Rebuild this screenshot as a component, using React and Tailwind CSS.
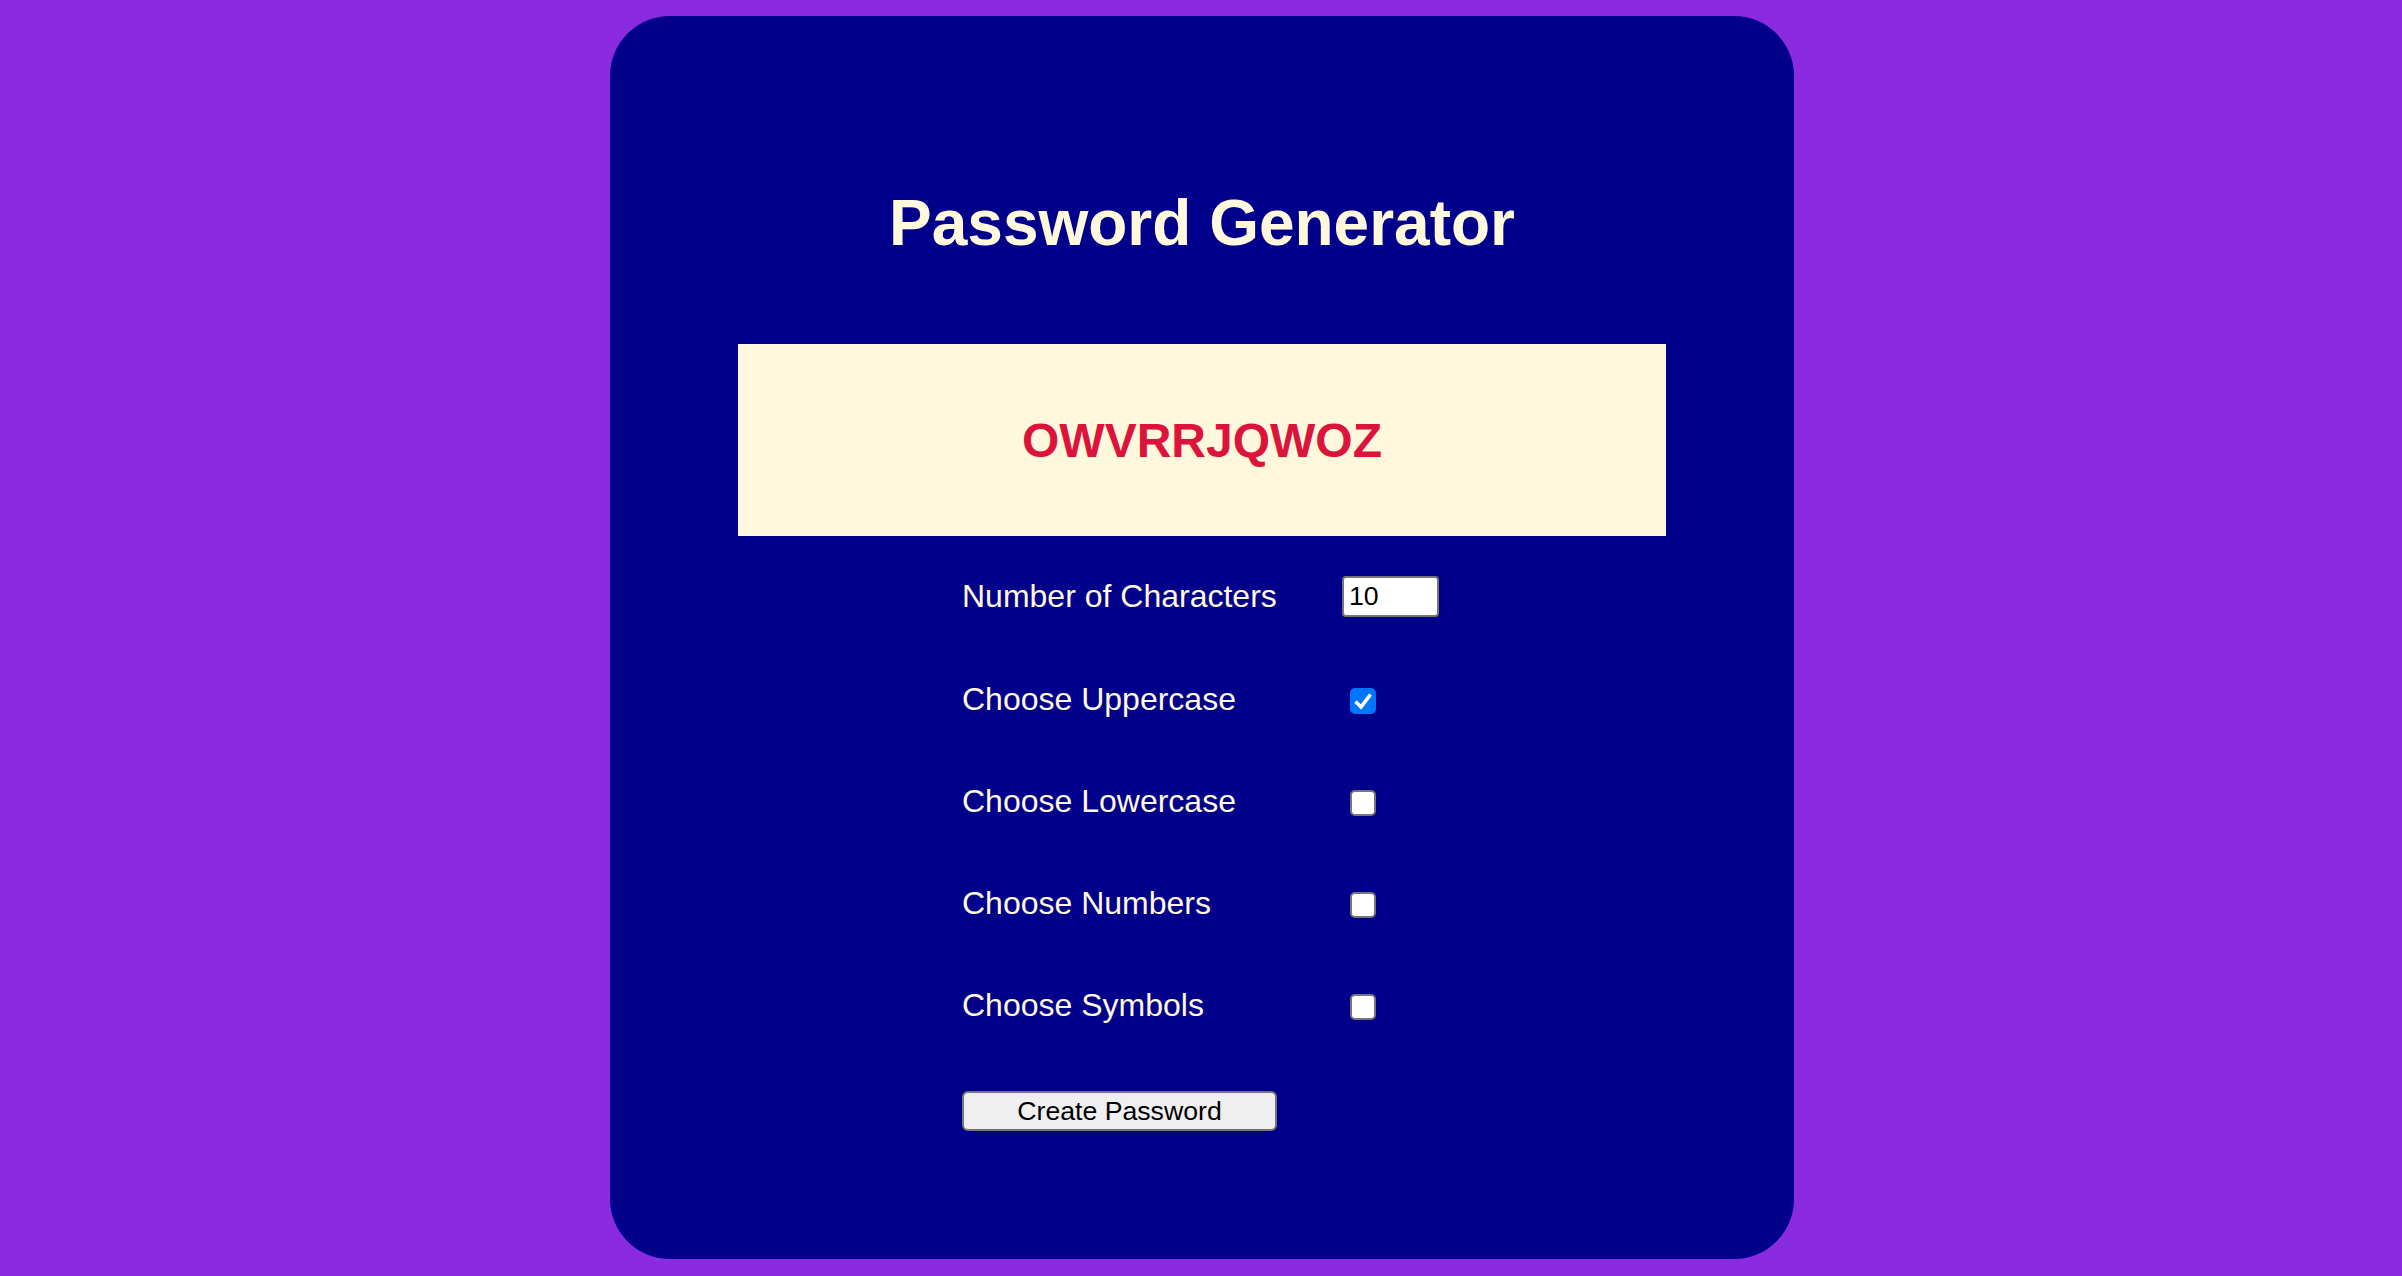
import { useState } from "react";

const FONT = { fontFamily: '"Liberation Sans", Arial, sans-serif' };

function CheckBox({ checked, onChange }) {
  return (
    <label className="relative ml-[8px] mt-[4px] block h-[26px] w-[26px] cursor-pointer">
      <input
        type="checkbox"
        checked={checked}
        onChange={onChange}
        className="block h-[26px] w-[26px] cursor-pointer appearance-none rounded-[5px] border-2 border-[#767676] bg-white checked:border-[#0075ff] checked:bg-[#0075ff]"
      />
      {checked && (
        <svg viewBox="0 0 26 26" className="pointer-events-none absolute inset-0 h-[26px] w-[26px]">
          <path d="M5.5 13.5 L11 19 L20.5 6.5" fill="none" stroke="white" strokeWidth="3.6" strokeLinejoin="miter" />
        </svg>
      )}
    </label>
  );
}

function Row({ label, first, children }) {
  return (
    <div className={`flex items-center ${first ? "h-[104px]" : "h-[102px]"}`}>
      <span className="w-[380px] text-[32px] leading-[37px] text-[#fff8dc]">{label}</span>
      {children}
    </div>
  );
}

export default function App() {
  const [length, setLength] = useState("10");
  const [opts, setOpts] = useState({ upper: true, lower: false, numbers: false, symbols: false });
  const [password] = useState("OWVRRJQWOZ");

  const toggle = (key) => setOpts((o) => ({ ...o, [key]: !o[key] }));

  return (
    <div className="min-h-screen bg-[#8a2be2] pl-[2px] pt-[16px]" style={FONT}>
      <div className="mx-auto w-[1184px] rounded-[60px] bg-[#00008b] pb-[128px] pt-[170px]">
        <h1 className="h-[74px] text-center text-[64px] font-bold leading-[74px] text-[#fff8dc]">
          Password Generator
        </h1>

        <div className="mx-auto mt-[84px] flex h-[192px] w-[928px] items-center justify-center bg-[#fff8dc]">
          <h2 className="text-[48px] font-bold leading-[55px] text-[#dc143c]">{password}</h2>
        </div>

        <div className="mx-auto mt-[8px] w-[480px]">
          <Row label="Number of Characters" first>
            <input
              type="number"
              value={length}
              onChange={(e) => setLength(e.target.value)}
              className="h-[41px] w-[97px] appearance-none rounded-[4px] border-2 border-[#767676] bg-white px-[5px] text-[26.67px] leading-[31px] text-black outline-none [&::-webkit-inner-spin-button]:appearance-none"
            />
          </Row>
          <Row label="Choose Uppercase">
            <CheckBox checked={opts.upper} onChange={() => toggle("upper")} />
          </Row>
          <Row label="Choose Lowercase">
            <CheckBox checked={opts.lower} onChange={() => toggle("lower")} />
          </Row>
          <Row label="Choose Numbers">
            <CheckBox checked={opts.numbers} onChange={() => toggle("numbers")} />
          </Row>
          <Row label="Choose Symbols">
            <CheckBox checked={opts.symbols} onChange={() => toggle("symbols")} />
          </Row>

          <button className="mt-[35px] h-[40px] w-[315px] rounded-[6px] border-2 border-[#767676] bg-[#efefef] text-[26.67px] leading-[31px] text-black">
            Create Password
          </button>
        </div>
      </div>
    </div>
  );
}
